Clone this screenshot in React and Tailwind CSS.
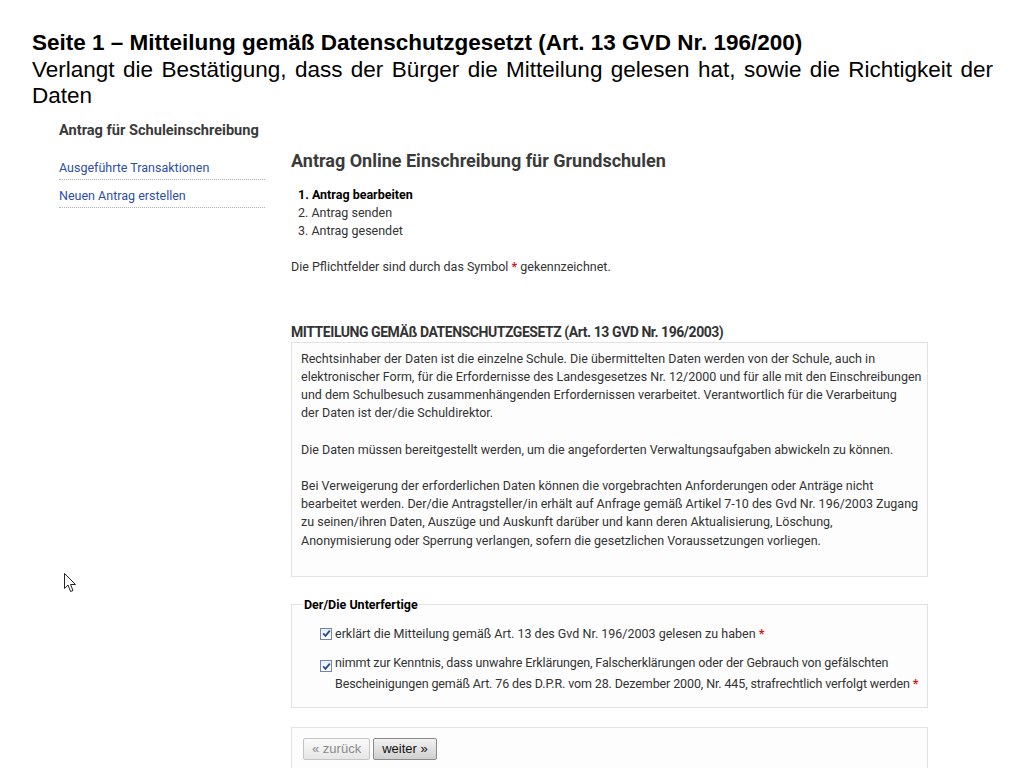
import React from "react";

const body = { fontFamily: "Roboto, 'Noto Sans', sans-serif" };

function Check() {
  return (
    <span className="inline-flex w-[12px] h-[12px] border border-[#7087a8] bg-gradient-to-b from-[#e8eef8] to-[#ffffff] items-center justify-center mr-[3px] shrink-0">
      <svg width="9" height="9" viewBox="0 0 9 9">
        <path d="M1.2 4.4 L3.5 6.8 L7.8 1.6" fill="none" stroke="#2a4a8a" strokeWidth="1.8" />
      </svg>
    </span>
  );
}

function Star() {
  return <span className="text-[#cc1a1a] font-bold"> *</span>;
}

export default function App() {
  return (
    <div className="relative w-[1024px] h-[768px] overflow-hidden bg-white">
      <div className="pl-[32px] pr-[31px] pt-[30px] text-[22.5px] leading-[26.5px] text-black" style={{ fontFamily: "'Liberation Sans', Arial, sans-serif" }}>
        <div className="font-bold text-[22.5px]">Seite 1 – Mitteilung gemäß Datenschutzgesetzt (Art. 13 GVD Nr. 196/200)</div>
        <div className="text-justify">Verlangt die Bestätigung, dass der Bürger die Mitteilung gelesen hat, sowie die Richtigkeit der Daten</div>
      </div>

      <div className="flex pl-[59px] pt-[10px]" style={body}>
        <div className="w-[206px] shrink-0">
          <div className="text-[14.6px] leading-[20px] font-bold text-[#3a3a3a]">Antrag für Schuleinschreibung</div>
          <div className="mt-[18px]">
            <div className="text-[12.5px] leading-[20px] text-[#2d4ea8] border-b border-dotted border-[#b0b0b0] pb-[1px]">Ausgeführte Transaktionen</div>
            <div className="text-[12.5px] leading-[20px] text-[#2d4ea8] border-b border-dotted border-[#b0b0b0] pb-[1px] mt-[6px]">Neuen Antrag erstellen</div>
          </div>
        </div>

        <div className="ml-[26px] w-[637px] text-[#333]">
          <div className="mt-[30px] text-[18px] leading-[22px] font-bold text-[#3a3a3a]">Antrag Online Einschreibung für Grundschulen</div>
          <div className="mt-[14px] pl-[7px] text-[12.5px] leading-[18px]">
            <div className="font-bold text-black">1. Antrag bearbeiten</div>
            <div>2. Antrag senden</div>
            <div>3. Antrag gesendet</div>
          </div>
          <div className="mt-[18px] text-[12.5px] leading-[18px]">
            Die Pflichtfelder sind durch das Symbol <span className="text-[#cc1a1a] font-bold">*</span> gekennzeichnet.
          </div>

          <div className="mt-[46px] text-[14px] leading-[20px] font-bold text-[#333] tracking-[-0.45px]">MITTEILUNG GEMÄß DATENSCHUTZGESETZ (Art. 13 GVD Nr. 196/2003)</div>
          <div className="border border-[#e2e2e2] bg-[#fdfdfd] pl-[9px] pr-[1px] pt-[7px] pb-[26px] text-[12.5px] leading-[18.2px] text-[#333]">
            <p className="mb-[18.2px]">Rechtsinhaber der Daten ist die einzelne Schule. Die übermittelten Daten werden von der Schule, auch in<br />elektronischer Form, für die Erfordernisse des Landesgesetzes Nr. 12/2000 und für alle mit den Einschreibungen<br />und dem Schulbesuch zusammenhängenden Erfordernissen verarbeitet. Verantwortlich für die Verarbeitung<br />der Daten ist der/die Schuldirektor.</p>
            <p className="mb-[18.2px]">Die Daten müssen bereitgestellt werden, um die angeforderten Verwaltungsaufgaben abwickeln zu können.</p>
            <p>Bei Verweigerung der erforderlichen Daten können die vorgebrachten Anforderungen oder Anträge nicht<br />bearbeitet werden. Der/die Antragsteller/in erhält auf Anfrage gemäß Artikel 7-10 des Gvd Nr. 196/2003 Zugang<br />zu seinen/ihren Daten, Auszüge und Auskunft darüber und kann deren Aktualisierung, Löschung,<br />Anonymisierung oder Sperrung verlangen, sofern die gesetzlichen Voraussetzungen vorliegen.</p>
          </div>

          <fieldset className="mt-[19px] min-w-0 w-full border border-[#e2e2e2] bg-[#fdfdfd] pl-[28px] pr-[2px] pt-[10px] pb-[13px] text-[12.5px] text-[#333]">
            <legend className="ml-[-17px] px-[1px] text-[12.5px] leading-[18px] font-bold text-black">Der/Die Unterfertige</legend>
            <div className="flex items-center leading-[20px]"><Check /><span>erklärt die Mitteilung gemäß Art. 13 des Gvd Nr. 196/2003 gelesen zu haben<Star /></span></div>
            <div className="flex items-start leading-[21px] mt-[8px]">
              <span className="mt-[4px]"><Check /></span>
              <span className="whitespace-nowrap tracking-[-0.12px]">nimmt zur Kenntnis, dass unwahre Erklärungen, Falscherklärungen oder der Gebrauch von gefälschten<br />Bescheinigungen gemäß Art. 76 des D.P.R. vom 28. Dezember 2000, Nr. 445, strafrechtlich verfolgt werden<Star /></span>
            </div>
          </fieldset>

          <div className="mt-[19px] border border-[#e2e2e2] bg-[#fdfdfd] pl-[11px] pt-[10px] pb-[20px] flex gap-[3px]" style={{ fontFamily: "'Liberation Sans', Arial, sans-serif" }}>
            <span className="h-[22px] px-[8px] border border-[#c4c4c4] rounded-[2px] bg-gradient-to-b from-[#fafafa] to-[#e6e6e6] text-[13px] leading-[20px] text-[#8a8a8a]">« zurück</span>
            <span className="h-[22px] px-[8px] border border-[#8a8a8a] rounded-[2px] bg-gradient-to-b from-[#f2f2f2] to-[#cfcfcf] text-[13px] leading-[20px] text-[#111]">weiter »</span>
          </div>
        </div>
      </div>

      <svg className="absolute left-[64px] top-[573px]" width="13" height="20" viewBox="0 0 13 20">
        <path d="M0.5 0.5 L0.5 15.5 L4 12 L6.5 18.5 L9 17.5 L6.5 11.5 L11.5 11.5 Z" fill="#fff" stroke="#222" strokeWidth="1" strokeLinejoin="round" />
      </svg>
    </div>
  );
}
